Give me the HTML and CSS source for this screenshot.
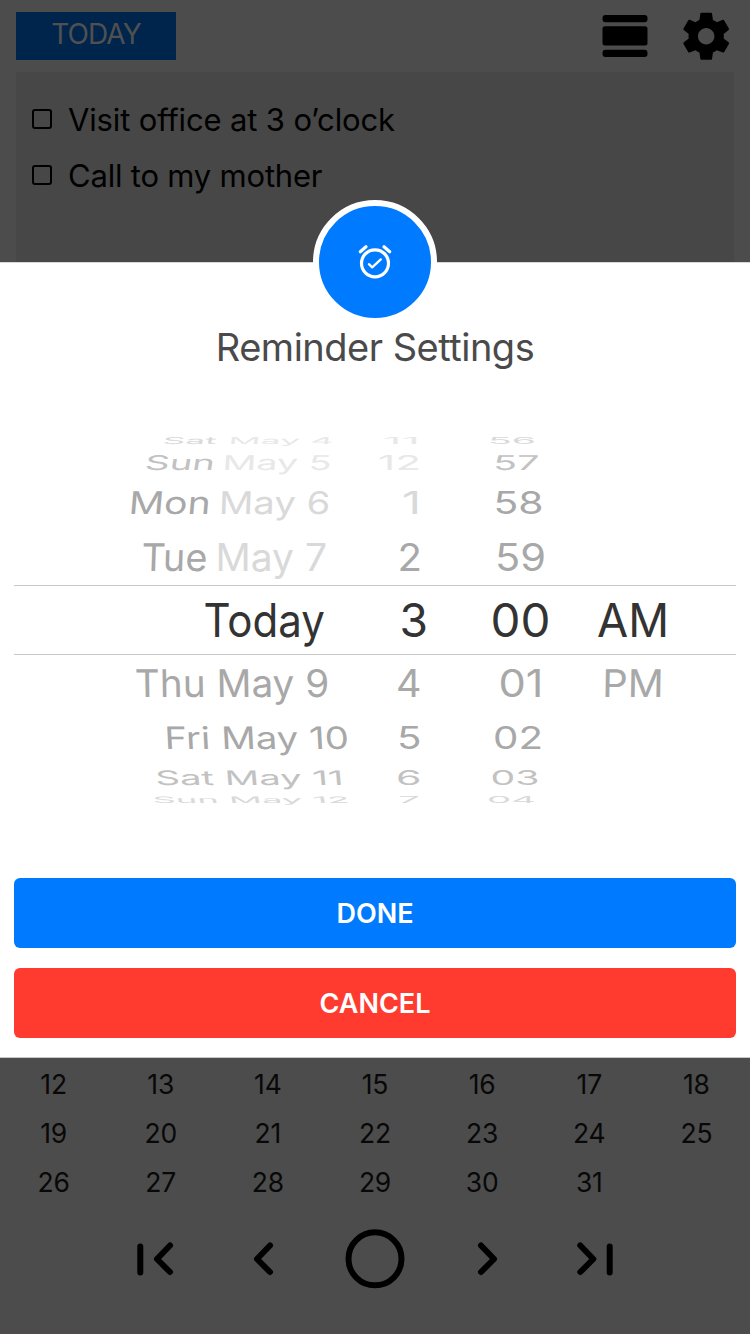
FILE: index.html
```html
<!DOCTYPE html>
<html lang="en">
<head>
<meta charset="utf-8">
<title>Reminder Settings</title>
<link rel="stylesheet" href="styles.css">
</head>
<body>
<div class="app">
  <header class="topbar">
    <button class="today">TODAY</button>
    <div class="tools">
      <svg width="46" height="48" viewBox="0 0 46 48"><rect x="0.5" y="3" width="45" height="7.3" rx="3"/><rect x="0.5" y="14.3" width="45" height="19.2" rx="2.5"/><rect x="0.5" y="37.8" width="45" height="7.3" rx="3"/></svg>
      <svg class="gear" width="56.4" height="56.4" viewBox="0 0 24 24"><path d="M19.43 12.98c.04-.32.07-.64.07-.98s-.03-.66-.07-.98l2.11-1.65c.19-.15.24-.42.12-.64l-2-3.46c-.12-.22-.39-.3-.61-.22l-2.49 1c-.52-.4-1.08-.73-1.69-.98l-.38-2.65C14.46 2.18 14.25 2 14 2h-4c-.25 0-.46.18-.49.42l-.38 2.65c-.61.25-1.17.59-1.69.98l-2.49-1c-.23-.09-.49 0-.61.22l-2 3.46c-.13.22-.07.49.12.64l2.11 1.65c-.04.32-.07.65-.07.98s.03.66.07.98l-2.11 1.65c-.19.15-.24.42-.12.64l2 3.46c.12.22.39.3.61.22l2.49-1c.52.4 1.08.73 1.69.98l.38 2.65c.03.24.24.42.49.42h4c.25 0 .46-.18.49-.42l.38-2.65c.61-.25 1.17-.59 1.69-.98l2.49 1c.23.09.49 0 .61-.22l2-3.46c.12-.22.07-.49-.12-.64l-2.11-1.65zM12 15.5c-1.93 0-3.5-1.57-3.5-3.5s1.57-3.5 3.5-3.5 3.5 1.57 3.5 3.5-1.57 3.5-3.5 3.5z"/></svg>
    </div>
  </header>

  <section class="tasks">
    <div class="task"><span class="box"></span><span class="label first">Visit office at 3 o’clock</span></div>
    <div class="task"><span class="box"></span><span class="label second">Call to my mother</span></div>
  </section>

  <main class="sheet">
    <div class="badge">
      <svg width="40" height="40" viewBox="0 0 40 40"><circle cx="20" cy="21.3" r="13.5"/><path d="M5.3 9.7 11 4.8M34.7 9.7 29 4.8"/><path class="tick" d="M13.9 22.2l3.3 3.2 8.6-8"/></svg>
    </div>
    <h1 class="title">Reminder Settings</h1>

    <div class="wheel">
      <svg width="750" height="12" viewBox="0 436 750 12">
        <g font-size="40">
          <text class="c3" transform="translate(162 443.5) skewX(-12) scale(1 .24)" textLength="54" lengthAdjust="spacingAndGlyphs">Sat</text>
          <text class="c4" transform="translate(228 443.5) skewX(-8) scale(1 .24)" textLength="105" lengthAdjust="spacingAndGlyphs">May 4</text>
          <text class="c4" transform="translate(383 443.5) scale(1 .24)" textLength="37" lengthAdjust="spacingAndGlyphs">11</text>
          <text class="c3" transform="translate(488 443.5) scale(1 .24)" textLength="48" lengthAdjust="spacingAndGlyphs">56</text>
        </g>
      </svg>
      <svg width="750" height="30" viewBox="0 448 750 30">
        <g font-size="40">
          <text class="c2" transform="translate(144 470) skewX(-9) scale(1 .51)" textLength="70" lengthAdjust="spacingAndGlyphs">Sun</text>
          <text class="c4" transform="translate(222 470) skewX(-4) scale(1 .51)" textLength="109" lengthAdjust="spacingAndGlyphs">May 5</text>
          <text class="c4" transform="translate(378 470) scale(1 .51)" textLength="43" lengthAdjust="spacingAndGlyphs">12</text>
          <text class="c2" transform="translate(493 470) skewX(-2) scale(1 .51)" textLength="46" lengthAdjust="spacingAndGlyphs">57</text>
        </g>
      </svg>
      <svg width="750" height="46" viewBox="0 478 750 46">
        <g font-size="40">
          <text class="c1" transform="translate(128 514) skewX(-5) scale(1 .78)" textLength="82" lengthAdjust="spacingAndGlyphs">Mon</text>
          <text class="c3" transform="translate(218.500 514) skewX(-2) scale(1 .78)" textLength="111.500" lengthAdjust="spacingAndGlyphs">May 6</text>
          <text class="c3" transform="translate(402 514) scale(1 .78)" textLength="19" lengthAdjust="spacingAndGlyphs">1</text>
          <text class="c1" transform="translate(493.500 514) scale(1 .78)" textLength="50" lengthAdjust="spacingAndGlyphs">58</text>
        </g>
      </svg>
      <svg width="750" height="61" viewBox="0 524 750 61">
        <g font-size="38">
          <text class="c1" transform="translate(141 571) skewX(-2)" textLength="66" lengthAdjust="spacingAndGlyphs">Tue</text>
          <text class="c3" transform="translate(215.500 571)" textLength="111.500" lengthAdjust="spacingAndGlyphs">May 7</text>
          <text class="c1" x="397.500" y="571" textLength="24.500" lengthAdjust="spacingAndGlyphs">2</text>
          <text class="c1" x="495" y="571" textLength="51" lengthAdjust="spacingAndGlyphs">59</text>
        </g>
      </svg>
      <svg class="current" width="722" height="68" viewBox="14 586 722 68">
        <g font-size="46" class="c0">
          <text x="203.500" y="637" textLength="121.500" lengthAdjust="spacingAndGlyphs">Today</text>
          <text x="399.500" y="637" textLength="28.500" lengthAdjust="spacingAndGlyphs">3</text>
          <text x="490.500" y="637" textLength="60" lengthAdjust="spacingAndGlyphs">00</text>
          <text x="597" y="637" textLength="72" lengthAdjust="spacingAndGlyphs">AM</text>
        </g>
      </svg>
      <svg width="750" height="54" viewBox="0 655 750 54">
        <g font-size="38" class="c1">
          <text transform="translate(135 696.700) skewX(1)" textLength="194.500" lengthAdjust="spacingAndGlyphs">Thu May 9</text>
          <text x="396" y="696.700" textLength="25.500" lengthAdjust="spacingAndGlyphs">4</text>
          <text x="498.500" y="696.700" textLength="45" lengthAdjust="spacingAndGlyphs">01</text>
          <text transform="translate(602 696.700) skewX(-1)" textLength="61.500" lengthAdjust="spacingAndGlyphs">PM</text>
        </g>
      </svg>
      <svg width="750" height="47" viewBox="0 709 750 47">
        <g font-size="40" class="c1">
          <text transform="translate(165 748.600) skewX(3) scale(1 .77)" textLength="184.500" lengthAdjust="spacingAndGlyphs">Fri May 10</text>
          <text transform="translate(397 748.600) scale(1 .77)" textLength="24.500" lengthAdjust="spacingAndGlyphs">5</text>
          <text transform="translate(493 748.600) scale(1 .77)" textLength="50" lengthAdjust="spacingAndGlyphs">02</text>
        </g>
      </svg>
      <svg width="750" height="34" viewBox="0 756 750 34">
        <g font-size="40" class="c2">
          <text transform="translate(156 784.700) skewX(5) scale(1 .5)" textLength="188" lengthAdjust="spacingAndGlyphs">Sat May 11</text>
          <text transform="translate(396 784.700) scale(1 .5)" textLength="25.500" lengthAdjust="spacingAndGlyphs">6</text>
          <text transform="translate(490.500 784.700) scale(1 .5)" textLength="49" lengthAdjust="spacingAndGlyphs">03</text>
        </g>
      </svg>
      <svg width="750" height="16" viewBox="0 790 750 16">
        <g font-size="40" class="c3">
          <text transform="translate(153 803) skewX(10) scale(1 .22)" textLength="197" lengthAdjust="spacingAndGlyphs">Sun May 12</text>
          <text transform="translate(398 803) scale(1 .22)" textLength="22" lengthAdjust="spacingAndGlyphs">7</text>
          <text transform="translate(487 803) scale(1 .22)" textLength="49" lengthAdjust="spacingAndGlyphs">04</text>
        </g>
      </svg>
    </div>

    <div class="actions">
      <button class="btn done">DONE</button>
      <button class="btn cancel">CANCEL</button>
    </div>
  </main>

  <section class="calendar">
    <span>12</span><span>13</span><span>14</span><span>15</span><span>16</span><span>17</span><span>18</span>
    <span>19</span><span>20</span><span>21</span><span>22</span><span>23</span><span>24</span><span>25</span>
    <span>26</span><span>27</span><span>28</span><span>29</span><span>30</span><span>31</span><span></span>
  </section>

  <nav class="pager">
    <svg width="40" height="60" viewBox="0 0 40 60"><path d="M5.300 17.500V43.500M35 16.500 22 30 35 43"/></svg>
    <svg width="31" height="60" viewBox="0 0 31 60"><path d="M25 16.500 12 30 25 43"/></svg>
    <svg width="60" height="60" viewBox="0 0 60 60"><circle cx="30" cy="29.800" r="26.500"/></svg>
    <svg width="31" height="60" viewBox="0 0 31 60"><path d="M6 16.500 19 30 6 43"/></svg>
    <svg width="40" height="60" viewBox="0 0 40 60"><path d="M5.300 16.500 18.300 30 5.300 43M34.700 17.500V43.500"/></svg>
  </nav>
</div>
</body>
</html>
```

FILE: styles.css
```css
* { box-sizing: border-box; }
body {
  margin: 0;
  background: #4c4c4c;
  font-family: Inter, "Liberation Sans", sans-serif;
  color: #000;
}
button { border: 0; font-family: inherit; padding: 0; }
svg { display: block; }

.app {
  width: 750px;
  height: 1334px;
  overflow: hidden;
  display: flex;
  flex-direction: column;
  border-bottom: 1px solid #53494c;
}

.topbar {
  height: 72px;
  padding: 12px 15.800px 0 16px;
  display: flex;
  justify-content: space-between;
  align-items: flex-start;
}
.today {
  width: 160px;
  height: 48px;
  padding-bottom: 4px;
  background: #00254d;
  color: #505050;
  font-size: 28px;
  font-weight: 400;
  letter-spacing: -0.9px;
}
.tools { display: flex; gap: 30px; }
.gear { margin-top: -4.200px; }

.tasks {
  height: 190px;
  margin: 0 16px;
  padding: 20px 16px;
  background: #474747;
}
.task { height: 56px; display: flex; align-items: center; gap: 16px; }
.box { width: 20px; height: 20px; border: 2px solid #000; border-radius: 3px; margin-bottom: 2px; }
.label { font-size: 31px; white-space: nowrap; padding-bottom: 2px; }
.first { letter-spacing: -0.150px; }
.second { letter-spacing: -0.200px; }

.sheet {
  height: 796px;
  background: #fff;
  border-top: 1px solid #d8d8d8;
  border-bottom: 1px solid #c8c8c8;
}
.badge {
  width: 124px;
  height: 124px;
  margin: -63px auto 0;
  border: 6px solid #fff;
  border-radius: 50%;
  background: #007aff;
  display: flex;
  align-items: center;
  justify-content: center;
}
.badge svg { fill: none; stroke: #fff; stroke-width: 3.200; stroke-linecap: round; stroke-linejoin: round; }
.badge .tick { stroke-width: 2.300; }
.title {
  margin: 0;
  height: 112px;
  line-height: 46px;
  text-align: center;
  font-size: 38px;
  font-weight: 400;
  letter-spacing: -0.500px;
  color: #4a4a4a;
}

.wheel { height: 442px; }
.wheel svg { overflow: visible; }
.current {
  box-sizing: content-box;
  margin: 0 14px;
  border-top: 1px solid #c8c8c8;
  border-bottom: 1px solid #c8c8c8;
}
.c0 { fill: #333; }
.c1 { fill: #a8a8a8; }
.c2 { fill: #c2c2c2; }
.c3 { fill: #d9d9d9; }
.c4 { fill: #e8e8e8; }

.actions { padding: 0 14px; display: flex; flex-direction: column; gap: 20px; }
.btn {
  height: 70px;
  border-radius: 6px;
  color: #fff;
  font-size: 27px;
  font-weight: 600;
}
.done { background: #007aff; }
.cancel { background: #ff3b30; }

.calendar {
  margin-top: 1px;
  display: grid;
  grid-template-columns: repeat(7, 1fr);
  grid-auto-rows: 49px;
  align-items: center;
  text-align: center;
  font-size: 26.500px;
  letter-spacing: -0.200px;
  color: #080808;
}

.pager {
  margin-top: 23px;
  padding: 0 135px;
  display: flex;
  justify-content: space-between;
}
.pager svg { fill: none; stroke: #000; stroke-width: 6; stroke-linecap: round; stroke-linejoin: round; }
```
